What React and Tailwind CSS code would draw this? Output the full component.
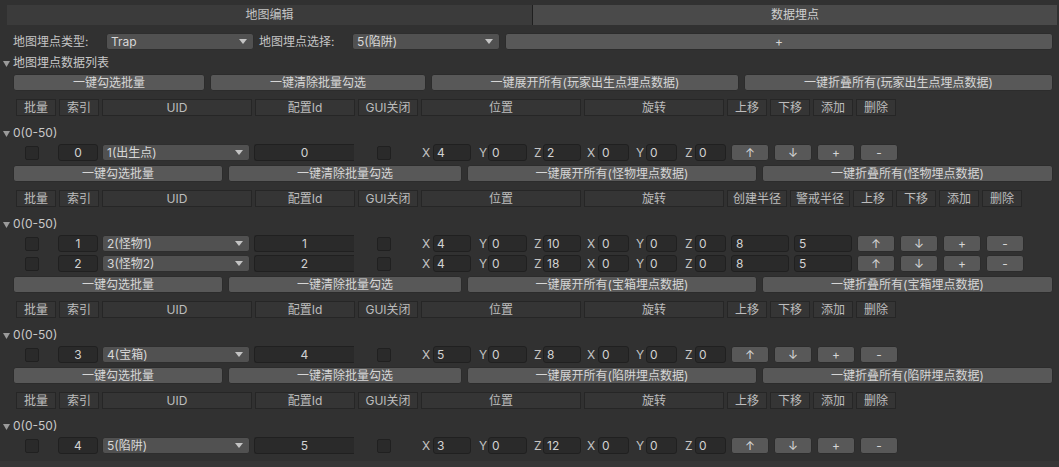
import React from "react";

const topBtns = [
  { w: "w-[192px]", t: "一键勾选批量" },
  { w: "w-[216px]", t: "一键清除批量勾选" },
  { w: "w-[308px]", t: "一键展开所有(玩家出生点埋点数据)" },
  { w: "w-[309px]", t: "一键折叠所有(玩家出生点埋点数据)" },
];

const sections = [
  {
    name: "怪物埋点数据",
    radius: true,
    rows: [
      { idx: "1", uid: "2(怪物1)", id: "1", pos: ["4", "0", "10"], extra: ["8", "5"] },
      { idx: "2", uid: "3(怪物2)", id: "2", pos: ["4", "0", "18"], extra: ["8", "5"] },
    ],
  },
  { name: "宝箱埋点数据", rows: [{ idx: "3", uid: "4(宝箱)", id: "4", pos: ["5", "0", "8"] }] },
  { name: "陷阱埋点数据", rows: [{ idx: "4", uid: "5(陷阱)", id: "5", pos: ["3", "0", "12"] }] },
];

function Btn({ className = "", children }) {
  return (
    <div
      className={
        "h-[17px] shrink-0 rounded-[3px] border border-[#2c2c2c] bg-[#585858] text-[#d6d6d6] flex items-center justify-center whitespace-nowrap " +
        className
      }
    >
      {children}
    </div>
  );
}

function Cell({ className = "", children }) {
  return (
    <div
      className={
        "h-[17px] shrink-0 border border-[#262626] bg-[#353535] text-[#bdbdbd] flex items-center justify-center whitespace-nowrap " +
        className
      }
    >
      {children}
    </div>
  );
}

function Field({ className = "", children }) {
  return (
    <div
      className={
        "h-[17px] shrink-0 rounded-[3px] border border-[#202020] bg-[#2a2a2a] text-[#d2d2d2] flex items-center whitespace-nowrap " +
        className
      }
    >
      {children}
    </div>
  );
}

function Drop({ className = "", children }) {
  return (
    <div
      className={
        "h-[17px] shrink-0 rounded-[3px] border border-[#2e2e2e] bg-[#515151] text-[#d8d8d8] flex items-center justify-between pl-[4px] pr-[6px] whitespace-nowrap " +
        className
      }
    >
      <span>{children}</span>
      <svg width="8" height="5" viewBox="0 0 8 5">
        <path d="M0 0H8L4 5Z" fill="#c4c4c4" />
      </svg>
    </div>
  );
}

function Check({ className = "" }) {
  return <div className={"h-[14px] w-[14px] shrink-0 rounded-[2px] border border-[#202020] bg-[#2a2a2a] " + className} />;
}

function Lbl({ className = "", children }) {
  return <div className={"shrink-0 pl-[2px] text-[#c4c4c4] " + className}>{children}</div>;
}

function Fold({ children }) {
  return (
    <div className="mt-[8px] flex h-[18px] items-center text-[#c8c8c8]">
      <svg className="ml-[3px]" width="7" height="7" viewBox="0 0 7 7">
        <path d="M0 1H7L3.5 7Z" fill="#9a9a9a" />
      </svg>
      <span className="ml-[3px]">{children}</span>
    </div>
  );
}

function Header({ radius }) {
  return (
    <div className="mt-[8px] ml-[16px] flex gap-[3px]">
      <Cell className="w-[40px]">批量</Cell>
      <Cell className="w-[40px]">索引</Cell>
      <Cell className="w-[150px]">UID</Cell>
      <Cell className="w-[100px]">配置Id</Cell>
      <Cell className="w-[60px]">GUI关闭</Cell>
      <Cell className="w-[160px]">位置</Cell>
      <Cell className="w-[140px]">旋转</Cell>
      {radius && <Cell className="w-[60px]">创建半径</Cell>}
      {radius && <Cell className="w-[60px]">警戒半径</Cell>}
      <Cell className="w-[40px]">上移</Cell>
      <Cell className="w-[40px]">下移</Cell>
      <Cell className="w-[40px]">添加</Cell>
      <Cell className="w-[40px]">删除</Cell>
    </div>
  );
}

function DataRow({ r, first }) {
  return (
    <div className={"flex h-[17px] items-center " + (first ? "mt-[2px]" : "mt-[3px]")}>
      <Check className="ml-[25px]" />
      <Field className="ml-[19px] w-[40px] justify-center">{r.idx}</Field>
      <Drop className="ml-[4px] w-[148px]">{r.uid}</Drop>
      <Field className="ml-[4px] w-[100px] justify-center rounded-r-none border-r-0">{r.id}</Field>
      <Check className="ml-[23px]" />
      <Lbl className="ml-[29px] w-[13px]">X</Lbl>
      <Field className="w-[38px] pl-[3px]">{r.pos[0]}</Field>
      <Lbl className="ml-[6px] w-[11px]">Y</Lbl>
      <Field className="w-[39px] pl-[3px]">{r.pos[1]}</Field>
      <Lbl className="ml-[5px] w-[11px]">Z</Lbl>
      <Field className="w-[38px] pl-[3px]">{r.pos[2]}</Field>
      <Lbl className="ml-[4px] w-[13px]">X</Lbl>
      <Field className="w-[31px] pl-[3px]">0</Field>
      <Lbl className="ml-[5px] w-[12px]">Y</Lbl>
      <Field className="w-[31px] pl-[3px]">0</Field>
      <Lbl className="ml-[6px] w-[12px]">Z</Lbl>
      <Field className="w-[31px] pl-[3px]">0</Field>
      {r.extra && (
        <>
          <Field className="ml-[5px] w-[58px] pl-[4px]">{r.extra[0]}</Field>
          <Field className="ml-[5px] w-[58px] pl-[4px]">{r.extra[1]}</Field>
        </>
      )}
      <div className="ml-[5px] flex gap-[5px]">
        <Btn className="w-[38px]">↑</Btn>
        <Btn className="w-[38px]">↓</Btn>
        <Btn className="w-[38px]">+</Btn>
        <Btn className="w-[38px]">-</Btn>
      </div>
    </div>
  );
}

function BtnRow({ name }) {
  return (
    <div className="mt-[4px] ml-[13px] flex gap-[5px]">
      <Btn className="w-[210px]">一键勾选批量</Btn>
      <Btn className="w-[234px]">一键清除批量勾选</Btn>
      <Btn className="w-[290px]">一键展开所有({name})</Btn>
      <Btn className="w-[291px]">一键折叠所有({name})</Btn>
    </div>
  );
}

export default function App() {
  return (
    <div className="flex h-[467px] w-[1059px] flex-col overflow-hidden bg-[#313131] font-['Inter','Noto_Sans_CJK_SC',sans-serif] text-[12px] leading-none">
      <div className="mt-[5px] ml-[7px] flex h-[20px]">
        <div className="flex w-[525px] items-center justify-center bg-[#3b3b3b] text-[#c4c4c4]">地图编辑</div>
        <div className="w-[1px] bg-[#1f1f1f]" />
        <div className="flex w-[524px] items-center justify-center bg-[#4a4a4a] text-[#cfcfcf]">数据埋点</div>
      </div>

      <div className="mt-[8px] flex h-[17px] items-center">
        <Lbl className="ml-[11px] w-[95px]">地图埋点类型:</Lbl>
        <Drop className="w-[148px]">Trap</Drop>
        <Lbl className="ml-[3px] w-[95px]">地图埋点选择:</Lbl>
        <Drop className="w-[148px]">5(陷阱)</Drop>
        <Btn className="ml-[5px] w-[548px]">+</Btn>
      </div>

      <div className="mt-[4px] flex h-[18px] items-center text-[#c8c8c8]">
        <svg className="ml-[3px]" width="7" height="7" viewBox="0 0 7 7">
          <path d="M0 1H7L3.5 7Z" fill="#9a9a9a" />
        </svg>
        <span className="ml-[3px]">地图埋点数据列表</span>
      </div>

      <div className="mt-[2px] ml-[13px] flex gap-[5px]">
        {topBtns.map((b) => (
          <Btn key={b.t} className={b.w}>
            {b.t}
          </Btn>
        ))}
      </div>
      <Header />
      <Fold>0(0-50)</Fold>
      <DataRow first r={{ idx: "0", uid: "1(出生点)", id: "0", pos: ["4", "0", "2"] }} />

      {sections.map((s) => (
        <React.Fragment key={s.name}>
          <BtnRow name={s.name} />
          <Header radius={s.radius} />
          <Fold>0(0-50)</Fold>
          {s.rows.map((r, i) => (
            <DataRow key={r.idx} r={r} first={i === 0} />
          ))}
        </React.Fragment>
      ))}

      <div className="mt-[7px] flex-1 bg-[#363636]" />
    </div>
  );
}
